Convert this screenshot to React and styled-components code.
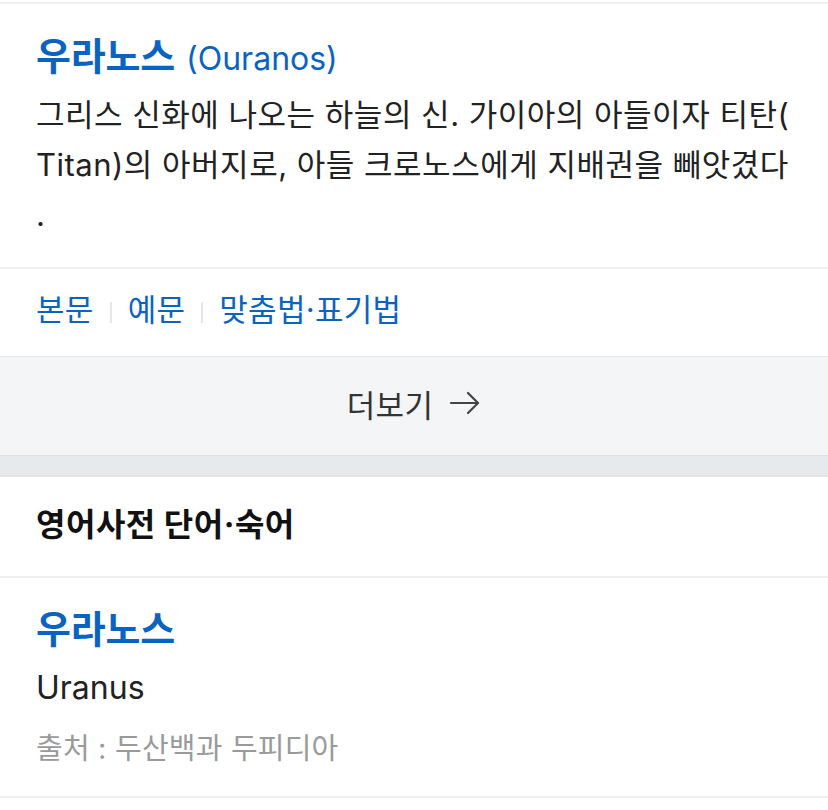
import React from "react";
import styled, { createGlobalStyle } from "styled-components";

const Global = createGlobalStyle`
  html, body { margin: 0; padding: 0; background: #ffffff; }
  body { font-family: Inter, "Noto Sans CJK KR", sans-serif; -webkit-font-smoothing: antialiased; }
  *, *::before, *::after { box-sizing: border-box; }
`;

const Page = styled.div`
  width: 828px;
  padding-top: 2px;
  background: #ffffff;
`;

const Card = styled.section`
  border-top: ${(p) => (p.$flat ? "none" : "2px solid #eef0f2")};
  background: #ffffff;
`;

const Entry = styled.div`
  padding: 28px 36px 27px;
  border-bottom: 2px solid #eeeff1;
`;

const Headword = styled.h2`
  margin: 0 0 7px;
  font-size: 38px;
  line-height: 48px;
  font-weight: 700;
  color: #0b63c1;
  letter-spacing: -0.2px;
`;

const Origin = styled.span`
  font-size: 32px;
  font-weight: 400;
  margin-left: 11px;
  letter-spacing: 0;
`;

const Desc = styled.p`
  margin: 0;
  font-size: 31px;
  line-height: 50px;
  color: #222;
  word-break: break-all;
  letter-spacing: 0.5px;
`;

const Links = styled.nav`
  display: flex;
  align-items: center;
  height: 88px;
  padding: 0 36px 5px;
  border-bottom: 1px solid #e4e7ea;
`;

const LinkItem = styled.a`
  font-size: 31px;
  color: #0b63c1;
  text-decoration: none;
  line-height: 40px;
  letter-spacing: 0.3px;
`;

const Sep = styled.span`
  width: 2px;
  height: 21px;
  margin: 5px 16px 0;
  background: #e6e6e6;
`;

const More = styled.div`
  display: flex;
  align-items: center;
  justify-content: center;
  gap: 16px;
  height: 98px;
  padding-bottom: 6px;
  background: #f3f5f7;
  color: #333;
  font-size: 31px;
  letter-spacing: 0.3px;
`;

const Band = styled.div`
  height: 22px;
  background: #e7eaed;
  border-top: 1px solid #dfe2e5;
  border-bottom: 2px solid #e2e5e8;
`;

const SectionHead = styled.h3`
  margin: 0;
  height: 101px;
  display: flex;
  align-items: center;
  padding: 0 36px 10px;
  font-size: 32px;
  font-weight: 700;
  color: #111;
  border-bottom: 2px solid #eeeff1;
  letter-spacing: 0.5px;
`;

const Result = styled.div`
  padding: 26px 36px 25px;
  border-bottom: 2px solid #eeeff1;
`;

const ResultWord = styled.div`
  font-size: 38px;
  line-height: 50px;
  font-weight: 700;
  color: #0b63c1;
  letter-spacing: -0.2px;
`;

const Meaning = styled.div`
  margin-top: 12px;
  font-size: 32px;
  line-height: 44px;
  color: #222;
`;

const Source = styled.div`
  margin-top: 17px;
  font-size: 29px;
  line-height: 44px;
  color: #9a9a9a;
  letter-spacing: 0.2px;
`;

const Arrow = () => (
  <svg width="32" height="24" viewBox="0 0 32 24" fill="none" stroke="#444" strokeWidth="2.2" strokeLinecap="round" strokeLinejoin="round">
    <path d="M2 12 H29" />
    <path d="M19 2 L29 12 L19 22" />
  </svg>
);

export default function App() {
  return (
    <Page>
      <Global />
      <Card>
        <Entry>
          <Headword>
            우라노스<Origin>(Ouranos)</Origin>
          </Headword>
          <Desc>
            그리스 신화에 나오는 하늘의 신. 가이아의 아들이자 티탄(
            <br />
            Titan)의 아버지로, 아들 크로노스에게 지배권을 빼앗겼다
            <br />.
          </Desc>
        </Entry>
        <Links>
          <LinkItem href="#">본문</LinkItem>
          <Sep />
          <LinkItem href="#">예문</LinkItem>
          <Sep />
          <LinkItem href="#">맞춤법·표기법</LinkItem>
        </Links>
        <More>
          더보기 <Arrow />
        </More>
      </Card>
      <Band />
      <Card $flat>
        <SectionHead>영어사전 단어·숙어</SectionHead>
        <Result>
          <ResultWord>우라노스</ResultWord>
          <Meaning>Uranus</Meaning>
          <Source>출처 : 두산백과 두피디아</Source>
        </Result>
      </Card>
    </Page>
  );
}
